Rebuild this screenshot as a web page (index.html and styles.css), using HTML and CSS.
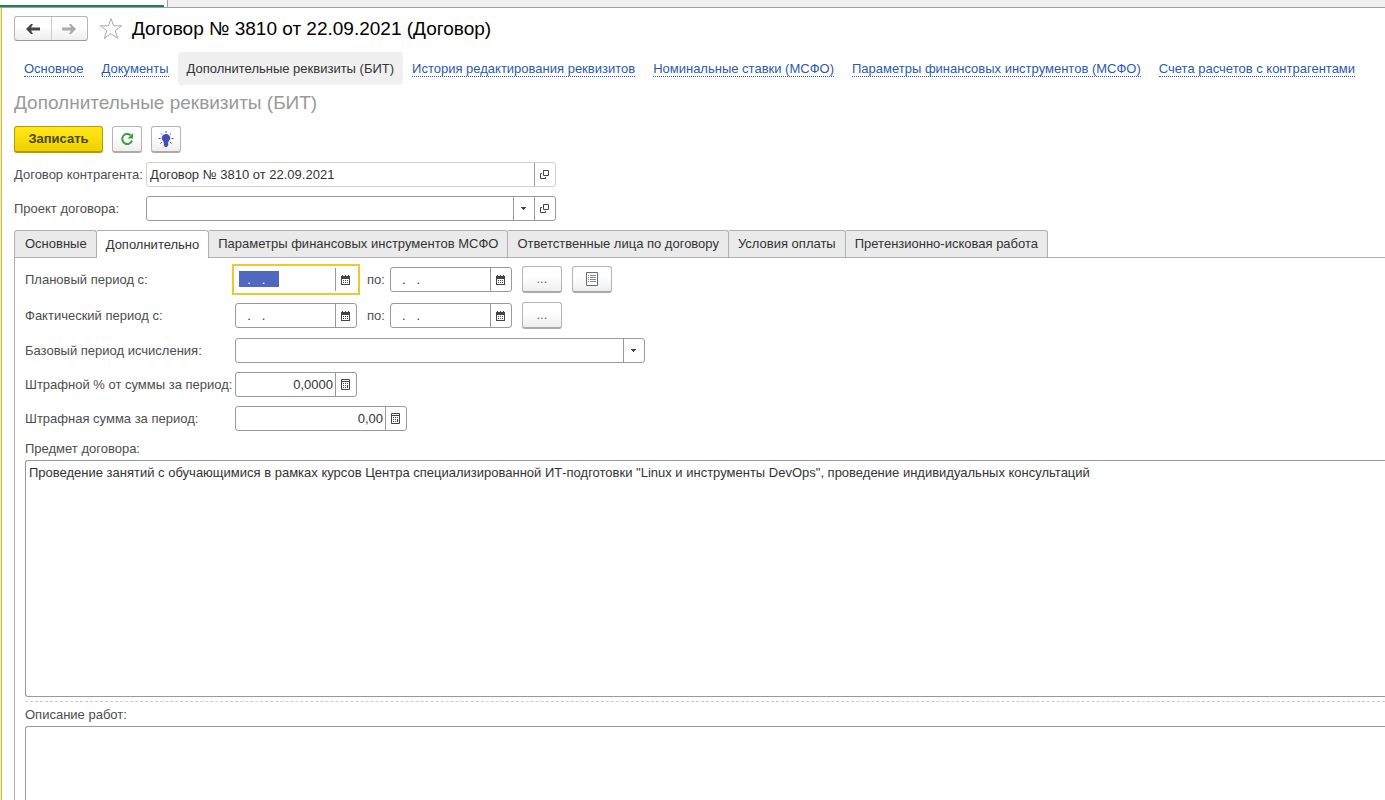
FILE: index.html
```html
<!DOCTYPE html>
<html lang="ru">
<head>
<meta charset="utf-8">
<meta name="viewport" content="width=device-width, initial-scale=1">
<title>Договор № 3810 от 22.09.2021 (Договор)</title>
<link rel="stylesheet" href="styles.css">
</head>
<body>
<svg class="symbols" aria-hidden="true">
  <symbol id="calendar" viewBox="0 0 9 10"><path d="M0 1h9v9H0zM1 0h1v1H1zM4 0h1v1H4zM7 0h1v1H7z" fill="#444"/><path d="M1 4h7v5H1z" fill="#fff"/><path d="M2 5h1v1H2zM4 5h1v1H4zM6 5h1v1H6zM2 7h1v1H2zM4 7h1v1H4zM6 7h1v1H6z" fill="#444"/></symbol>
  <symbol id="calculator" viewBox="0 0 9 11"><path d="M.5.5h8v10h-8zM1 2.5h7" fill="none" stroke="#444"/><path d="M2 4h1v1H2zM4 4h1v1H4zM6 4h1v1H6zM2 6h1v1H2zM4 6h1v1H4zM6 6h1v3H6zM2 8h1v1H2zM4 8h1v1H4z" fill="#444"/></symbol>
  <symbol id="open" viewBox="0 0 9 9"><path d="M3.500.500h5v5h-5zM2 3.500H.500v5h5V7" fill="none" stroke="#444"/></symbol>
  <symbol id="arrow" viewBox="0 0 5 3"><path d="M0 0h5v1H4v1H3v1H2V2H1V1H0z" fill="#444"/></symbol>
</svg>
<div class="app-tabs"><div class="app-tab"></div></div>
<main class="form">
  <header class="title-row">
    <div class="history">
      <button type="button" aria-label="Назад"><svg width="14" height="10" viewBox="0 0 14 10"><path d="M0 5l5-5h2L5 3.500h9v3H5L7 10H5z" fill="#444"/></svg></button>
      <button type="button" aria-label="Вперед"><svg width="14" height="10" viewBox="0 0 14 10"><path d="M14 5L9 0H7l2 3.500H0v3h9L7 10h2z" fill="#aaa"/></svg></button>
    </div>
    <button type="button" class="star" aria-label="В избранное"><svg width="24" height="23" viewBox="0 0 24 23"><path d="M12 1.500l2.600 7.300h8l-6.400 4.800 2.500 7.700L12 16.700l-6.700 4.600 2.500-7.700-6.400-4.800h8z" fill="#fff" stroke="#aaa"/></svg></button>
    <h1>Договор № 3810 от 22.09.2021 (Договор)</h1>
  </header>
  <nav class="sections">
    <a href="#"><span>Основное</span></a>
    <a href="#"><span>Документы</span></a>
    <a href="#" class="current" aria-current="page"><span>Дополнительные реквизиты (БИТ)</span></a>
    <a href="#"><span>История редактирования реквизитов</span></a>
    <a href="#"><span>Номинальные ставки (МСФО)</span></a>
    <a href="#"><span>Параметры финансовых инструментов (МСФО)</span></a>
    <a href="#"><span>Счета расчетов с контрагентами</span></a>
  </nav>
  <h2>Дополнительные реквизиты (БИТ)</h2>
  <div class="commands">
    <button type="button" class="btn primary">Записать</button>
    <button type="button" class="btn icon" aria-label="Обновить"><svg width="14" height="14" viewBox="0 0 14 14"><path d="M10.500 3.200A5 5 0 1 0 12 8.500" fill="none" stroke="#39a03c" stroke-width="2"/><path d="M13 1v5.500H7.500z" fill="#39a03c"/></svg></button>
    <button type="button" class="btn icon" aria-label="Подсказка"><svg width="16" height="16" viewBox="0 0 16 16"><path d="M8 3a4.300 4.300 0 0 0-4.300 4.300c0 2 2.100 2.700 2.100 4.700v2l1.200 2h2l1.200-2v-2c0-2 2.100-2.700 2.100-4.700A4.300 4.300 0 0 0 8 3z" fill="#3f51b5"/><path d="M8 0v2M3 2.500l1.200 1.200M13 2.500l-1.200 1.200M.5 7.500h2M13.500 7.500h2M2.500 12.500l1.500-1.200M13.500 12.500L12 11.300" stroke="#3f51b5" fill="none"/></svg></button>
  </div>
  <div class="row head-row">
    <label for="contract">Договор контрагента:</label>
    <div class="field wide readonly"><input id="contract" value="Договор № 3810 от 22.09.2021" readonly><button type="button" aria-label="Открыть"><svg width="9" height="9"><use href="#open"/></svg></button></div>
  </div>
  <div class="row head-row">
    <label for="project">Проект договора:</label>
    <div class="field wide"><input id="project"><button type="button" aria-label="Выбрать"><svg width="5" height="3"><use href="#arrow"/></svg></button><button type="button" aria-label="Открыть"><svg width="9" height="9"><use href="#open"/></svg></button></div>
  </div>
  <div class="tabs" role="tablist">
    <button type="button" role="tab">Основные</button>
    <button type="button" role="tab" class="active" aria-selected="true">Дополнительно</button>
    <button type="button" role="tab">Параметры финансовых инструментов МСФО</button>
    <button type="button" role="tab">Ответственные лица по договору</button>
    <button type="button" role="tab">Условия оплаты</button>
    <button type="button" role="tab">Претензионно-исковая работа</button>
  </div>
  <section class="panel" role="tabpanel">
    <div class="row period">
      <label for="plan-from">Плановый период с:</label>
      <div class="field date focused"><input id="plan-from" value="  .   ."><button type="button" aria-label="Календарь"><svg width="9" height="10"><use href="#calendar"/></svg></button></div>
      <label class="to" for="plan-to">по:</label>
      <div class="field date"><input id="plan-to" value="  .   ."><button type="button" aria-label="Календарь"><svg width="9" height="10"><use href="#calendar"/></svg></button></div>
      <button type="button" class="btn more">...</button>
      <button type="button" class="btn more" aria-label="Список"><svg width="12" height="14" viewBox="0 0 12 14"><path d="M.5.5h11v13H.5z" fill="#fff" stroke="#5c6b7d"/><path d="M4 3.500h6M4 5.500h6M4 7.500h6M4 9.500h6" stroke="#888"/><path d="M2 3.500h1M2 5.500h1M2 7.500h1M2 9.500h1" stroke="#d0603a"/></svg></button>
    </div>
    <div class="row period">
      <label for="fact-from">Фактический период с:</label>
      <div class="field date"><input id="fact-from" value="  .   ."><button type="button" aria-label="Календарь"><svg width="9" height="10"><use href="#calendar"/></svg></button></div>
      <label class="to" for="fact-to">по:</label>
      <div class="field date"><input id="fact-to" value="  .   ."><button type="button" aria-label="Календарь"><svg width="9" height="10"><use href="#calendar"/></svg></button></div>
      <button type="button" class="btn more">...</button>
    </div>
    <div class="row">
      <label for="base">Базовый период исчисления:</label>
      <div class="field wide"><input id="base"><button type="button" aria-label="Выбрать"><svg width="5" height="3"><use href="#arrow"/></svg></button></div>
    </div>
    <div class="row">
      <label for="percent">Штрафной % от суммы за период:</label>
      <div class="field number"><input id="percent" value="0,0000"><button type="button" aria-label="Калькулятор"><svg width="9" height="11"><use href="#calculator"/></svg></button></div>
    </div>
    <div class="row">
      <label for="sum">Штрафная сумма за период:</label>
      <div class="field number sum"><input id="sum" value="0,00"><button type="button" aria-label="Калькулятор"><svg width="9" height="11"><use href="#calculator"/></svg></button></div>
    </div>
    <label class="caption" for="subject">Предмет договора:</label>
    <textarea id="subject">Проведение занятий с обучающимися в рамках курсов Центра специализированной ИТ-подготовки "Linux и инструменты DevOps", проведение индивидуальных консультаций</textarea>
    <hr>
    <label class="caption" for="works">Описание работ:</label>
    <textarea id="works" class="rest"></textarea>
  </section>
</main>
</body>
</html>
```
FILE: styles.css
```css
* { box-sizing: border-box; }
body {
  margin: 0;
  height: 100vh;
  display: flex;
  flex-direction: column;
  overflow: hidden;
  background: #fff;
  color: #333;
  font: 13px/16px "Liberation Sans", Arial, sans-serif;
}
button, input, textarea { font: inherit; color: inherit; margin: 0; outline: 0; }
button { padding: 0; border: 0; background: none; }
svg { display: block; }
.symbols { position: absolute; width: 0; height: 0; }

.app-tabs { flex: none; height: 8px; background: #f0f0f0; border-bottom: 1px solid #a0a0a0; }
.app-tab { width: 168px; height: 7px; background: #fff; border-right: 1px solid #a0a0a0; }
.app-tab::before { content: ""; display: block; width: 164px; height: 5px; border-bottom: 2px solid #1e8352; }

.form {
  flex: 1;
  min-height: 0;
  display: flex;
  flex-direction: column;
  padding: 8px 0 0 12px;
  border-left: 1px solid #c9b75a;
  margin-left: 1px;
  box-shadow: -1px 0 #fbeea0;
}
.title-row { display: flex; align-items: center; height: 25px; }
.history {
  display: flex;
  width: 74px;
  height: 25px;
  border: 1px solid #b4b4b4;
  border-bottom-color: #999;
  border-radius: 3px;
  background: linear-gradient(#fff 40%, #eee);
}
.history button { flex: 1; display: grid; place-items: center; }
.history button + button { border-left: 1px solid #ccc; }
.star { margin: 0 9px 0 11px; }
h1, h2 { margin: 0; font-weight: 400; }
h1 { font-size: 19px; line-height: 24px; color: #000; }
h2 { font-size: 19px; line-height: 24px; color: #999; margin: 6px 0 11px; }

.sections { display: flex; margin: 11px 0 0 1px; white-space: nowrap; }
.sections a { padding: 9px 9px 8px; color: #2b5ba8; text-decoration: none; }
.sections span { display: block; line-height: 15px; border-bottom: 1px dotted #2b5ba8; }
.sections .current { background: #f0f0f0; border-radius: 4px; color: #333; }
.sections .current span { border-color: transparent; }

.commands { display: flex; gap: 9px; margin-bottom: 9px; }
.btn {
  display: grid;
  place-items: center;
  height: 27px;
  border: 1px solid #b4b4b4;
  border-bottom: 2px solid #aaa;
  border-radius: 3px;
  background: linear-gradient(#fff 40%, #eee);
}
.btn.icon { width: 30px; }
.btn.primary {
  width: 89px;
  font-weight: 700;
  color: #4d4600;
  border-color: #b09d00;
  background: linear-gradient(#ffe81a, #f0d000);
}
.btn.more { width: 40px; color: #666; }

.row { display: flex; align-items: center; height: 25px; margin-bottom: 9px; }
label { color: #4d4d4d; white-space: nowrap; }
.row > label:first-child { width: 210px; }
.head-row > label:first-child { width: 132px; }
.field {
  display: flex;
  height: 25px;
  border: 1px solid #999;
  border-radius: 3px;
  background: #fff;
}
.field input { flex: 1; min-width: 0; border: 0; padding: 0 3px; background: transparent; }
.field button { width: 21px; padding-right: 1px; border-left: 1px solid #999; display: grid; place-items: center; }
.field.wide { width: 410px; }
.field.readonly { border-color: #d0d0d0; }
.field.date, .field.number { width: 122px; }
.field.number.sum { width: 172px; }
.field.number input { text-align: right; padding: 0 2px; }
.field.date input { padding: 0 4px; white-space: pre; }
.field.focused { outline: 2px solid #efc72f; outline-offset: 1px; border-color: transparent; border-radius: 0; }
.field.focused input {
  color: #fff;
  background: linear-gradient(#5068c0, #5068c0) 3px 3px / 40px 16px no-repeat;
}
.row .to { margin: 0 5px 0 10px; }
.period .btn { margin-left: 10px; }
.period { margin-bottom: 11px; }
.period + .row:not(.period) { margin-top: -1px; }

.tabs { display: flex; white-space: nowrap; }
.tabs button {
  height: 27px;
  padding: 0 9px;
  border: 1px solid #b0b0b0;
  border-width: 1px 1px 0 0;
  border-radius: 0 3px 0 0;
  background: #eaeaea;
}
.tabs button:first-child { padding-left: 10px; border-left-width: 1px; border-radius: 3px 3px 0 0; }
.tabs .active { background: #fff; height: 28px; margin-bottom: -1px; z-index: 1; }

.panel {
  flex: 1;
  min-height: 0;
  display: flex;
  flex-direction: column;
  padding: 9px 0 0 10px;
  border: 1px solid #b0b0b0;
  border-width: 1px 0 0 1px;
}
.panel > * { flex: none; }
.caption { line-height: 18px; padding-bottom: 2px; }
textarea {
  display: block;
  width: 100%;
  height: 237px;
  padding: 4px 3px;
  border: 1px solid #999;
  border-right: 0;
  border-radius: 3px 0 0 3px;
  background: #fff;
  resize: none;
}
.panel > .rest { flex: 1; min-height: 0; border-bottom: 0; border-radius: 3px 0 0 0; }
hr { width: 100%; margin: 4px 0; border: 0; border-top: 1px dashed #ccc; }
```
